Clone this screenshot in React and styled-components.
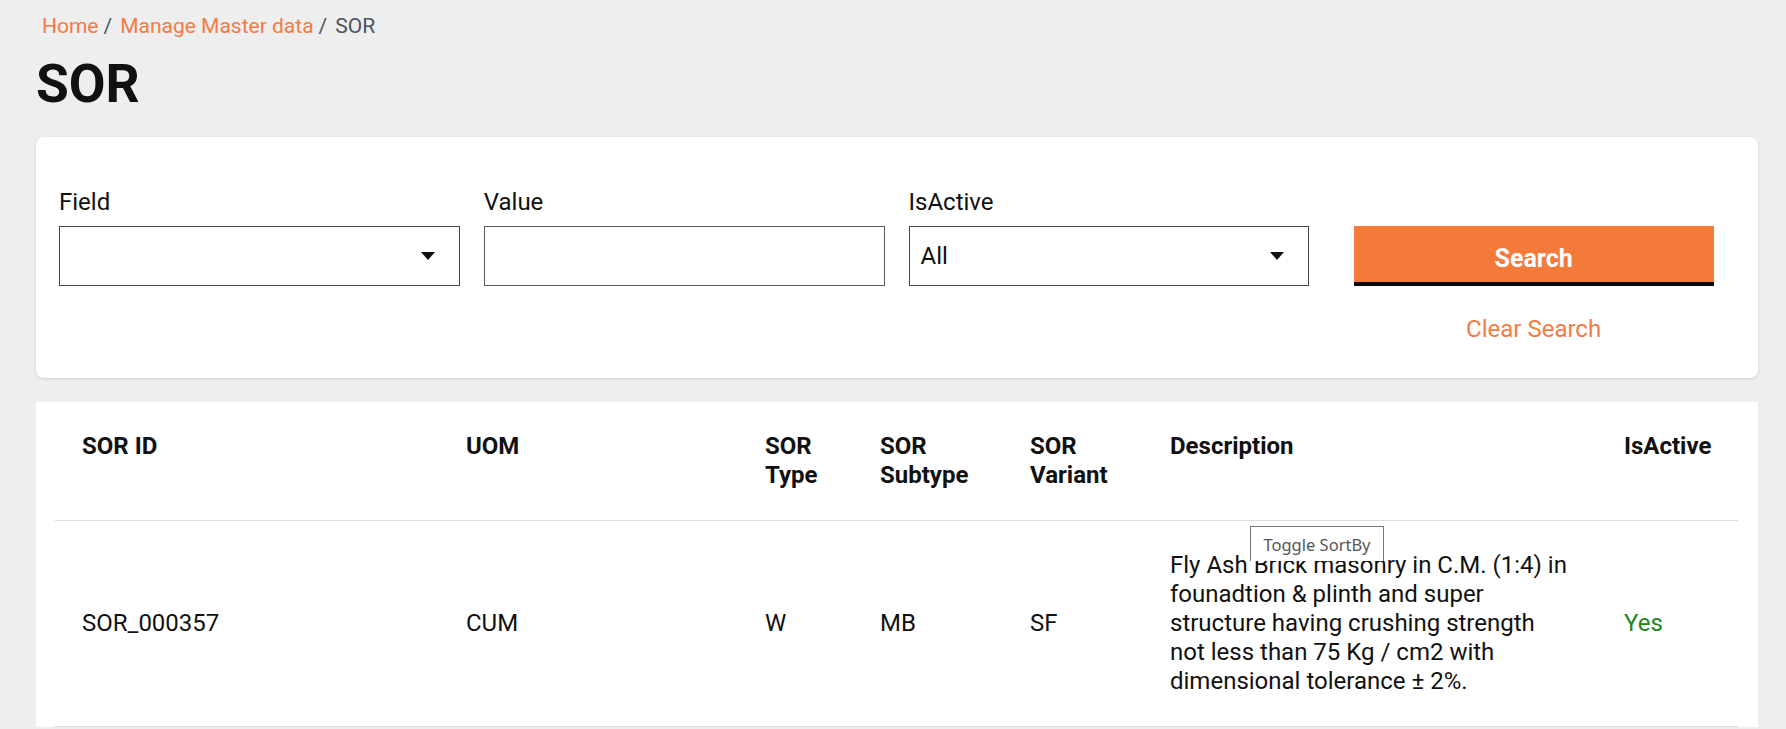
import React from "react";
import styled, { createGlobalStyle } from "styled-components";

const GlobalStyle = createGlobalStyle`
  html, body { margin: 0; padding: 0; }
  body {
    background: #eeeeee;
    font-family: Roboto, "Liberation Sans", Arial, sans-serif;
    color: #111111;
  }
  * { box-sizing: border-box; }
`;

const Page = styled.div`
  padding: 10px 28px 0 36px;
`;

const Breadcrumb = styled.nav`
  display: flex;
  align-items: center;
  padding-left: 6px;
  font-size: 21px;
  line-height: 32px;
`;

const Crumb = styled.span`
  color: ${(p) => (p.$active ? "#4b5560" : "#f47b45")};
  cursor: ${(p) => (p.$active ? "default" : "pointer")};
`;

const Sep = styled.span`
  color: #4b5560;
  padding: 0 8px 0 5px;
`;

const Title = styled.h1`
  margin: 10px 0 21px;
  font-size: 53.33px;
  line-height: 64px;
  font-weight: 700;
  color: #111111;
`;

const FilterCard = styled.section`
  background: #ffffff;
  border-radius: 8px;
  box-shadow: 0 1px 3px rgba(0, 0, 0, 0.14);
  padding: 51px 24px 35px 23px;
  display: grid;
  grid-template-columns: repeat(4, 1fr);
  column-gap: 24px;
  align-items: start;
`;

const Field = styled.div`
  display: flex;
  flex-direction: column;
  gap: 10px;
`;

const Label = styled.label`
  font-size: 24px;
  line-height: 28px;
  color: #111111;
`;

const SelectBox = styled.div`
  height: 60px;
  border: 1px solid #444444;
  background: #ffffff;
  display: flex;
  align-items: center;
  justify-content: space-between;
  padding: 0 24px 0 11px;
  font-size: 24px;
  color: #111111;
  cursor: pointer;
`;

const TextInput = styled.input`
  height: 60px;
  width: 100%;
  border: 1px solid #555b62;
  background: #ffffff;
  padding: 0 11px;
  font-size: 24px;
  font-family: inherit;
  outline: none;
`;

const ActionCol = styled.div`
  display: flex;
  flex-direction: column;
  align-items: center;
  padding-top: 38px;
`;

const SearchButton = styled.button`
  width: 360px;
  height: 60px;
  padding: 9px 0 0;
  background: #f47a3a;
  color: #ffffff;
  border: none;
  border-bottom: 4px solid #0a0a0a;
  font-family: inherit;
  font-size: 25px;
  font-weight: 700;
  cursor: pointer;
`;

const ClearLink = styled.span`
  margin-top: 29px;
  font-size: 24px;
  line-height: 28px;
  color: #f47b45;
  cursor: pointer;
`;

const TableCard = styled.section`
  position: relative;
  margin-top: 24px;
  background: #ffffff;
  padding: 0 20px 0 19px;
`;

const Table = styled.table`
  width: 100%;
  border-collapse: collapse;
  table-layout: fixed;
`;

const Th = styled.th`
  text-align: left;
  vertical-align: top;
  padding: 30px 27px;
  font-size: 24px;
  line-height: 29px;
  font-weight: 700;
  color: #111111;
  border-bottom: 1px solid #dcdcdc;
  cursor: pointer;
`;

const Td = styled.td`
  vertical-align: middle;
  padding: 30px 27px;
  font-size: 24px;
  line-height: 29px;
  color: ${(p) => (p.$status ? "#23861f" : "#111111")};
  border-bottom: 1px solid #dcdcdc;
`;

const Tooltip = styled.div`
  position: absolute;
  left: 1214px;
  top: 124px;
  width: 134px;
  height: 35px;
  padding-top: 2px;
  background: #ffffff;
  border: 1px solid #767676;
  border-bottom: none;
  font-family: "Noto Sans", "Open Sans", sans-serif;
  font-size: 16.5px;
  line-height: 32px;
  color: #575757;
  text-align: center;
  white-space: nowrap;
`;

const Arrow = () => (
  <svg width="14" height="8" viewBox="0 0 14 8" aria-hidden="true">
    <path d="M0 0 L14 0 L7 8 Z" fill="#111111" />
  </svg>
);

const columns = [
  { label: "SOR ID", width: 384 },
  { label: "UOM", width: 299 },
  { label: "SOR Type", width: 115 },
  { label: "SOR Subtype", width: 150 },
  { label: "SOR Variant", width: 140 },
  { label: "Description", width: 454 },
  { label: "IsActive", width: 141 },
];

const rows = [
  {
    id: "SOR_000357",
    uom: "CUM",
    type: "W",
    subtype: "MB",
    variant: "SF",
    description:
      "Fly Ash Brick masonry in C.M. (1:4) in founadtion & plinth and super structure having crushing strength not less than 75 Kg / cm2 with dimensional tolerance ± 2%.",
    active: "Yes",
  },
];

export default function App() {
  return (
    <>
      <GlobalStyle />
      <Page>
        <Breadcrumb>
          <Crumb>Home</Crumb>
          <Sep>/</Sep>
          <Crumb>Manage Master data</Crumb>
          <Sep>/</Sep>
          <Crumb $active>SOR</Crumb>
        </Breadcrumb>
        <Title>SOR</Title>

        <FilterCard>
          <Field>
            <Label>Field</Label>
            <SelectBox>
              <span></span>
              <Arrow />
            </SelectBox>
          </Field>
          <Field>
            <Label>Value</Label>
            <TextInput type="text" />
          </Field>
          <Field>
            <Label>IsActive</Label>
            <SelectBox>
              <span>All</span>
              <Arrow />
            </SelectBox>
          </Field>
          <ActionCol>
            <SearchButton>Search</SearchButton>
            <ClearLink>Clear Search</ClearLink>
          </ActionCol>
        </FilterCard>

        <TableCard>
          <Table>
            <colgroup>
              {columns.map((c) => (
                <col key={c.label} style={{ width: c.width }} />
              ))}
            </colgroup>
            <thead>
              <tr>
                {columns.map((c) => (
                  <Th key={c.label}>{c.label}</Th>
                ))}
              </tr>
            </thead>
            <tbody>
              {rows.map((r) => (
                <tr key={r.id}>
                  <Td>{r.id}</Td>
                  <Td>{r.uom}</Td>
                  <Td>{r.type}</Td>
                  <Td>{r.subtype}</Td>
                  <Td>{r.variant}</Td>
                  <Td>{r.description}</Td>
                  <Td $status>{r.active}</Td>
                </tr>
              ))}
            </tbody>
          </Table>
          <Tooltip>Toggle SortBy</Tooltip>
        </TableCard>
      </Page>
    </>
  );
}
